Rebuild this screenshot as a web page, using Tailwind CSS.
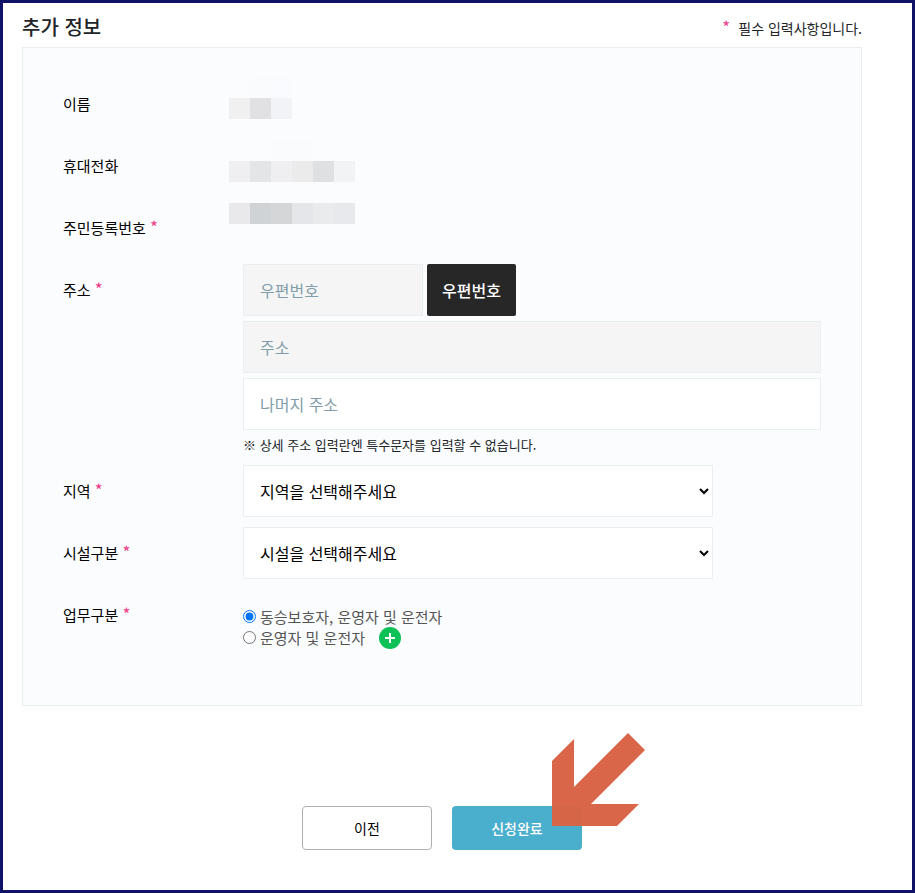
<!DOCTYPE html>
<html lang="ko">
<head>
<meta charset="utf-8">
<meta name="viewport" content="width=device-width, initial-scale=1">
<title>추가 정보</title>
<script src="https://cdn.jsdelivr.net/npm/@tailwindcss/browser@4"></script>
</head>
<body class="bg-white font-['Noto_Sans_CJK_KR','Noto_Sans',sans-serif] text-[15px] text-black">
<main class="min-h-screen border-3 border-[#0f1266] pt-1.5 pr-[50px] pb-10 pl-[19px]">
  <header class="flex h-[38px] items-center justify-between text-[#212529]">
    <h1 class="text-xl font-medium leading-6 pb-0.5">추가 정보</h1>
    <p class="text-sm leading-5"><span class="mr-2 text-[17px] leading-none text-[#f03e8a]">*</span>필수 입력사항입니다.</p>
  </header>

  <form>
    <section class="relative flex flex-col gap-2.5 border border-[#e9eef1] bg-[#fbfcfe] px-10 pt-[30px] pb-[57px]">
      <dl class="flex flex-col gap-2.5">
        <div class="flex h-[52px] items-center"><dt class="w-[180px] shrink-0">이름</dt><dd></dd></div>
        <div class="flex h-[52px] items-center"><dt class="w-[180px] shrink-0">휴대전화</dt><dd></dd></div>
        <div class="flex h-[52px] items-center"><dt class="w-[180px] shrink-0">주민등록번호 <span class="text-[17px] leading-none text-[#f03e8a]">*</span></dt><dd></dd></div>
      </dl>

      <div class="flex items-start">
        <label for="address" class="w-[180px] shrink-0 leading-[51px]">주소 <span class="text-[17px] leading-none text-[#f03e8a]">*</span></label>
        <div class="flex min-w-0 flex-1 flex-col gap-[5px]">
          <div class="flex gap-1">
            <input id="zip" aria-label="우편번호" placeholder="우편번호" readonly class="h-[52px] w-[180px] border border-[#e9eef1] bg-[#f5f5f5] px-4 text-base placeholder:text-[#829daa]">
            <button type="button" class="h-[52px] rounded-xs bg-[#272727] px-[15px] text-base font-medium text-white">우편번호</button>
          </div>
          <input id="address" placeholder="주소" readonly class="h-[52px] w-full border border-[#e9eef1] bg-[#f5f5f5] px-4 text-base placeholder:text-[#829daa]">
          <div>
            <input id="address2" aria-label="나머지 주소" placeholder="나머지 주소" class="block h-[52px] w-full border border-[#e9eef1] bg-white px-4 text-base placeholder:text-[#829daa]">
            <p class="pt-1 text-[13px] leading-[21px] text-[#212529]">※ 상세 주소 입력란엔 특수문자를 입력할 수 없습니다.</p>
          </div>
        </div>
      </div>

      <div class="flex items-center">
        <label for="region" class="w-[180px] shrink-0">지역 <span class="text-[17px] leading-none text-[#f03e8a]">*</span></label>
        <select id="region" class="h-[52px] w-full max-w-[470px] border border-[#e9eef1] bg-white pl-3 text-base"><option>지역을 선택해주세요</option></select>
      </div>
      <div class="flex items-center">
        <label for="facility" class="w-[180px] shrink-0">시설구분 <span class="text-[17px] leading-none text-[#f03e8a]">*</span></label>
        <select id="facility" class="h-[52px] w-full max-w-[470px] border border-[#e9eef1] bg-white pl-3 text-base"><option>시설을 선택해주세요</option></select>
      </div>

      <fieldset class="flex items-start" aria-labelledby="duty">
        <span id="duty" class="w-[180px] shrink-0 leading-[52px]">업무구분 <span class="text-[17px] leading-none text-[#f03e8a]">*</span></span>
        <div class="flex flex-col pt-[17px] leading-[21px] text-[#555]">
          <label class="flex h-[21px] items-center gap-1"><input type="radio" name="duty" checked class="size-[13px]">동승보호자, 운영자 및 운전자</label>
          <div class="flex h-[21px] items-center gap-3.5">
            <label class="flex items-center gap-1"><input type="radio" name="duty" class="size-[13px]">운영자 및 운전자</label>
            <button type="button" aria-label="추가" class="size-[22px] shrink-0 rounded-full bg-[#0dc157]">
              <svg viewBox="0 0 22 22" class="size-full" stroke="#fff" stroke-width="2"><path d="M11 6v10M6 11h10"/></svg>
            </button>
          </div>
        </div>
      </fieldset>

      <!-- Mosaic covering the personal details -->
      <svg class="absolute top-[29px] left-[206px]" width="126" height="147" viewBox="0 0 126 147" shape-rendering="crispEdges" aria-hidden="true">
        <path fill="#fafbfd" d="M21 0h21v21H21zM42 63h42v21H42z"/>
        <path fill="#fafbff" d="M42 0h21v21H42z"/>
        <path fill="#f0f0f0" d="M0 21h21v21H0z"/>
        <path fill="#e1e1e3" d="M21 21h21v21H21z"/>
        <path fill="#f1f3f7" d="M42 21h21v21H42z"/>
        <path fill="#efeff1" d="M0 84h21v21H0zM42 84h21v21H42z"/>
        <path fill="#e4e5e7" d="M21 84h21v21H21z"/>
        <path fill="#ebebeb" d="M63 84h21v21H63z"/>
        <path fill="#dfe0e2" d="M84 84h21v21H84z"/>
        <path fill="#f2f3f5" d="M105 84h21v21h-21z"/>
        <path fill="#e9e9eb" d="M0 126h21v21H0z"/>
        <path fill="#cfd3d6" d="M21 126h21v21H21z"/>
        <path fill="#d5d6d8" d="M42 126h21v21H42z"/>
        <path fill="#e4e6ea" d="M63 126h21v21H63z"/>
        <path fill="#eaebed" d="M84 126h21v21H84z"/>
        <path fill="#e7e9ed" d="M105 126h21v21h-21z"/>
      </svg>
    </section>

    <div class="mt-[100px] flex justify-center gap-5 text-sm">
      <button type="button" class="h-11 w-[130px] rounded-sm border border-[#b0b0b0] bg-white">이전</button>
      <div class="relative">
        <button type="submit" class="h-11 w-[130px] rounded-sm bg-[#4aaecd] font-medium text-white">신청완료</button>
        <svg class="pointer-events-none absolute -top-[73px] left-[100px]" width="93" height="93" viewBox="0 0 93 93" fill="#d86344" fill-opacity=".98" aria-hidden="true"><path d="M76 0 93 17 39 71H87L65 93H0V28L22 6V54Z"/></svg>
      </div>
    </div>
  </form>
</main>
</body>
</html>
